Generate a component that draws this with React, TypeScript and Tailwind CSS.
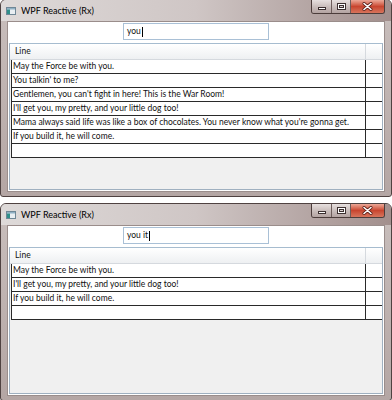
import React from "react";

const font = { fontFamily: '"Segoe UI", Lato, "Liberation Sans", sans-serif' };

const allLines = [
  "May the Force be with you.",
  "You talkin' to me?",
  "Gentlemen, you can't fight in here! This is the War Room!",
  "I'll get you, my pretty, and your little dog too!",
  "Mama always said life was like a box of chocolates. You never know what you're gonna get.",
  "If you build it, he will come.",
];

function AppIcon() {
  return (
    <svg width="10" height="8" viewBox="0 0 10 8">
      <rect x="0.5" y="0.5" width="9" height="7" fill="#e8eef2" stroke="#6f8796" />
      <rect x="1" y="1" width="8" height="1.5" fill="#8fb0c4" />
      <rect x="1" y="2.5" width="3" height="4.5" fill="#2f8f8a" />
    </svg>
  );
}

function CaptionButtons() {
  return (
    <div className="mr-[6px] flex h-[14px] overflow-hidden rounded-b-[3px] border border-t-0 border-[#4b3c3a]">
      {/* minimize */}
      <div className="flex w-[20px] items-end justify-center border-r border-[#6d5d5b] bg-linear-to-b from-[#e7e0df] via-[#cbbfbd] to-[#b3a3a1] pb-[3px]">
        <div className="h-[3px] w-[8px] border border-[#3c3030] bg-white" />
      </div>
      {/* restore */}
      <div className="flex w-[19px] items-center justify-center border-r border-[#6d5d5b] bg-linear-to-b from-[#e7e0df] via-[#cbbfbd] to-[#b3a3a1]">
        <div className="h-[7px] w-[9px] border border-[#3c3030] bg-white p-[1px]">
          <div className="h-full w-full border border-[#3c3030] bg-[#d8d0cf]" />
        </div>
      </div>
      {/* close */}
      <div className="flex w-[33px] items-center justify-center bg-linear-to-b from-[#eba898] via-[#c8452f] to-[#d7745c]">
        <svg width="11" height="9" viewBox="0 0 11 9">
          <path d="M2 1.5 L9 7.5 M9 1.5 L2 7.5" stroke="#5a1f17" strokeWidth="3" strokeLinecap="round" />
          <path d="M2 1.5 L9 7.5 M9 1.5 L2 7.5" stroke="#ffffff" strokeWidth="1.6" strokeLinecap="round" />
        </svg>
      </div>
    </div>
  );
}

function Window({ query, lines, className }: { query: string; lines: string[]; className?: string }) {
  return (
    <div
      className={`flex h-[198px] w-[392px] shrink-0 flex-col rounded-t-[6px] rounded-b-[3px] border border-[#4f4241] bg-linear-to-b from-[#c9bfbd] to-[#b4a6a4] ${className ?? ""}`}
      style={font}
    >
      {/* title bar */}
      <div className="flex h-[21px] shrink-0 items-start justify-between rounded-t-[5px] bg-linear-to-r from-[#dedad9] via-[#cfc6c5] to-[#a28f8d]">
        <div className="mt-[5px] flex items-center gap-[5px] pl-[5px]">
          <AppIcon />
          <span className="text-[9px] leading-[12px] text-black">WPF Reactive (Rx)</span>
        </div>
        <CaptionButtons />
      </div>

      {/* client area */}
      <div className="mx-[6px] flex h-[171px] flex-col border border-[#9a8d8b] bg-white">
        <div className="flex h-[21px] shrink-0 items-start pl-[115px] pt-[1px]">
          <div className="flex h-[17px] w-[146px] items-center border border-[#a9c0d6] bg-white pl-[3px] text-[8.5px] text-[#111]">
            <span>{query}</span>
            <span className="ml-[1px] h-[10px] w-[1px] bg-black" />
          </div>
        </div>

        <div className="mb-[1px] ml-[1px] flex w-[374px] flex-1 flex-col border border-[#9fb0c0] border-t-[#a6bccf] bg-[#f0f0f0]">
          {/* header */}
          <div className="flex h-[16px] shrink-0 border-b border-[#d5d9de] bg-linear-to-b from-[#ffffff] to-[#eef0f2]">
            <div className="flex w-[356px] items-center border-r border-[#d5d9de] pl-[5px] text-[8.5px] text-[#111]">
              Line
            </div>
            <div className="flex-1" />
          </div>

          {/* rows */}
          <div className="ml-[1px] flex flex-col border-l border-[#2a2a2a] text-[8.5px] text-[#111]">
            {[...lines, ""].map((line, i) => (
              <div key={i} className="flex h-[14px] border-b border-[#2a2a2a] bg-white">
                <div className="flex w-[354px] items-center overflow-hidden whitespace-nowrap border-r border-[#2a2a2a] pl-[1px]">
                  {line}
                </div>
                <div className="flex-1" />
              </div>
            ))}
          </div>
        </div>
      </div>
    </div>
  );
}

export default function App() {
  return (
    <div className="flex h-[400px] w-[392px] flex-col gap-[6px] overflow-hidden bg-white">
      <Window className="mt-[-1px]" query="you" lines={allLines} />
      <Window query="you it" lines={[allLines[0], allLines[3], allLines[5]]} />
    </div>
  );
}
